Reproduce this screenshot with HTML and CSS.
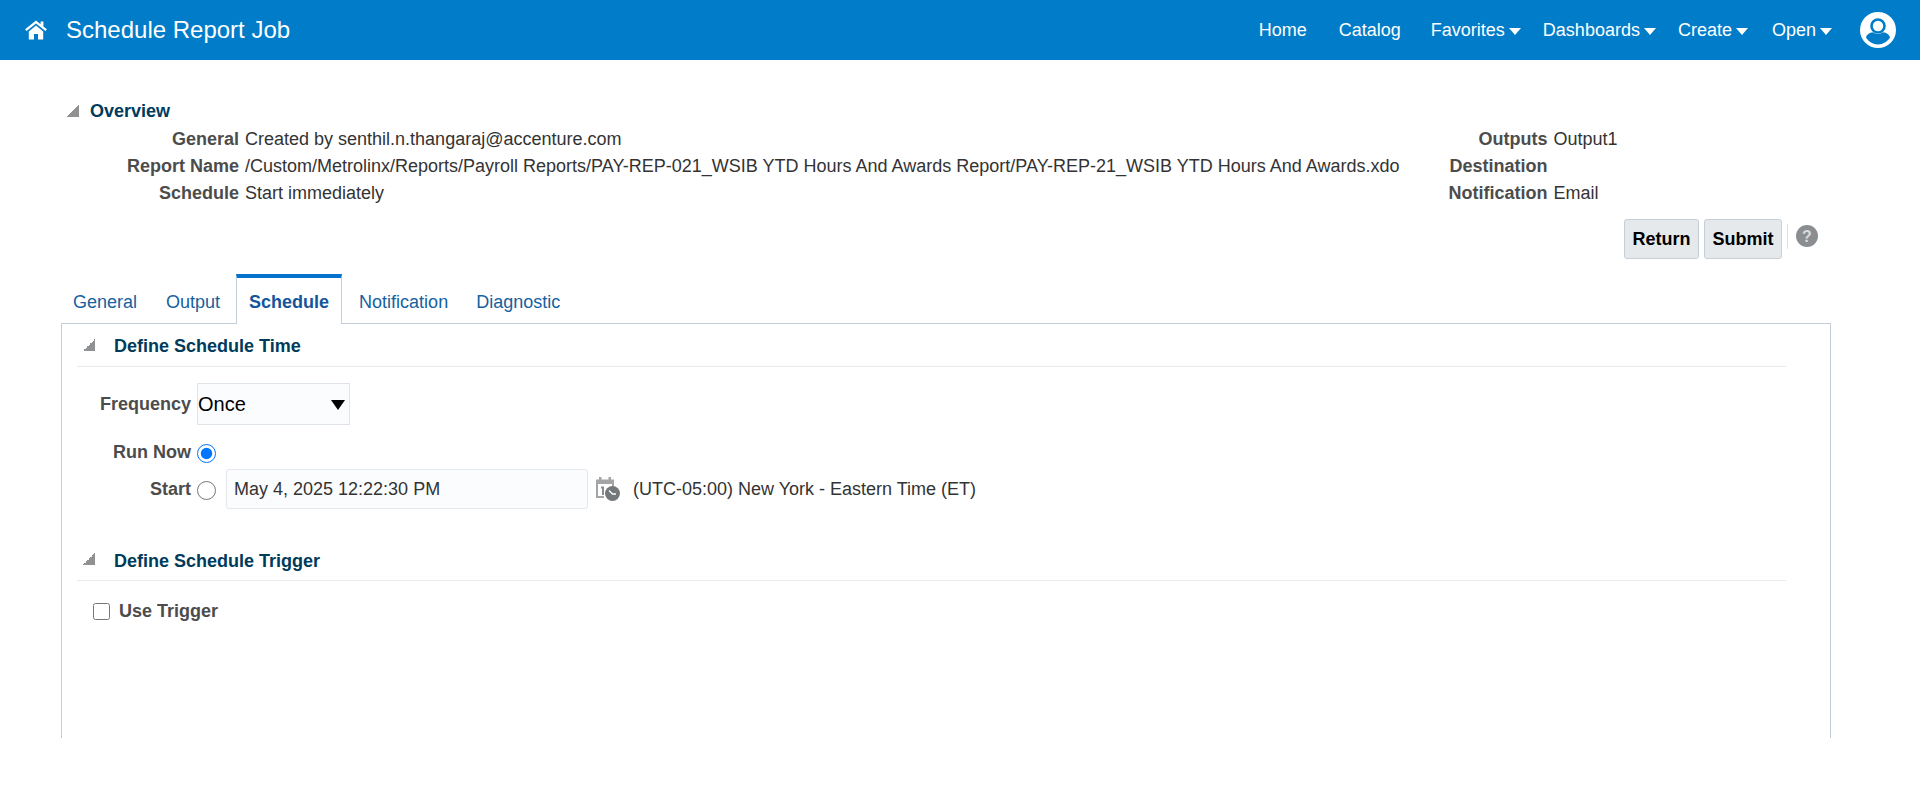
FILE: index.html
```html
<!DOCTYPE html>
<html lang="en">
<head>
<meta charset="utf-8">
<title>Schedule Report Job</title>
<link rel="stylesheet" href="styles.css">
</head>
<body>
<header class="topbar">
  <svg class="home" viewBox="0 0 24 20" width="24" height="20"><path fill="#fff" d="M12 3.400 2.600 11l-1.500-1.800L12 .6l4.600 3.700V1.500h2.800v5l3.500 2.700L21.400 11zM4.800 11.400 12 5.600l7.200 5.800V19.500h-5.200v-5.500h-4v5.500H4.800z"/></svg>
  <h1 class="title">Schedule Report Job</h1>
  <nav class="nav">
    <a class="nav-link nav-home">Home</a>
    <a class="nav-link nav-catalog">Catalog</a>
    <a class="nav-link nav-fav">Favorites<i class="caret"></i></a>
    <a class="nav-link nav-dash">Dashboards<i class="caret"></i></a>
    <a class="nav-link nav-create">Create<i class="caret"></i></a>
    <a class="nav-link nav-open">Open<i class="caret"></i></a>
  </nav>
  <svg class="avatar" viewBox="0 0 36 36" width="36" height="36"><circle cx="18" cy="18" r="18" fill="#fff"/><circle cx="18" cy="14" r="6.500" fill="none" stroke="#007cc8" stroke-width="2.600"/><path fill="#007cc8" d="M6 25.500c.5-3 3.500-5 7-5.300 1.500 1.200 3 1.800 5 1.800s3.500-.6 5-1.800c3.500.3 6.500 2.300 7 5.300-2.500 4-7 7-12 7s-9.500-3-12-7z"/></svg>
</header>

<main class="page">
  <section class="overview">
    <h2 class="sec-head overview-head"><i class="disclosure"></i>Overview</h2>
    <div class="summary">
      <dl class="facts facts-left">
        <dt>General</dt><dd>Created by senthil.n.thangaraj@accenture.com</dd>
        <dt>Report Name</dt><dd>/Custom/Metrolinx/Reports/Payroll Reports/PAY-REP-021_WSIB YTD Hours And Awards Report/PAY-REP-21_WSIB YTD Hours And Awards.xdo</dd>
        <dt>Schedule</dt><dd>Start immediately</dd>
      </dl>
      <dl class="facts facts-right">
        <dt>Outputs</dt><dd>Output1</dd>
        <dt>Destination</dt><dd></dd>
        <dt>Notification</dt><dd>Email</dd>
      </dl>
    </div>
    <div class="actions">
      <button class="btn btn-return">Return</button>
      <button class="btn btn-submit">Submit</button>
      <span class="sep"></span>
      <svg class="help" viewBox="0 0 22 22" width="22" height="22"><circle cx="11" cy="11" r="11" fill="#8b8e91"/><text x="11" y="16.500" text-anchor="middle" class="help-q">?</text></svg>
    </div>
  </section>

  <div class="tabs">
    <a class="tab tab-general">General</a>
    <a class="tab tab-output">Output</a>
    <a class="tab tab-active">Schedule</a>
    <a class="tab tab-notif">Notification</a>
    <a class="tab tab-diag">Diagnostic</a>
  </div>

  <section class="panel">
    <h2 class="sec-head panel-head"><i class="disclosure"></i>Define Schedule Time</h2>
    <div class="form">
      <div class="row row-freq">
        <label class="lbl">Frequency</label>
        <div class="select"><span>Once</span><i class="select-arrow"></i></div>
      </div>
      <div class="row row-run">
        <label class="lbl">Run Now</label>
        <input class="radio" type="radio" name="when" checked>
      </div>
      <div class="row row-start">
        <label class="lbl">Start</label>
        <input class="radio" type="radio" name="when">
        <input class="date" type="text" value="May 4, 2025 12:22:30 PM">
        <svg class="cal" viewBox="0 0 25 24" width="25" height="24">
          <path fill="#a3a5a7" d="M4 0h2.500v2.500h7V0H16v2.500h3V10h-2V7H3v12h6v2H1V2.500h3z"/>
          <path fill="#8a8d90" d="M6 9.500h3V18H7v-6.500H6z"/>
          <circle cx="17.500" cy="16.500" r="7.500" fill="#75787b"/>
          <path fill="none" stroke="#fff" stroke-width="1.300" d="M14 13.500l3.500 3.500h3.500"/>
        </svg>
        <span class="tz">(UTC-05:00) New York - Eastern Time (ET)</span>
      </div>
    </div>
    <h2 class="sec-head panel-head trigger-head"><i class="disclosure"></i>Define Schedule Trigger</h2>
    <label class="check-row"><input class="check" type="checkbox"><span>Use Trigger</span></label>
  </section>
</main>
</body>
</html>
```
FILE: styles.css
```css
* { box-sizing: border-box; }
html, body { margin: 0; padding: 0; background: #fff; }
body { font-family: "Liberation Sans", Arial, sans-serif; font-size: 18px; color: #333; height: 800px; overflow: hidden; }

.topbar { height: 60px; background: #007cc8; display: flex; align-items: center; padding: 0 0 0 24px; color: #fff; }
.home { flex: none; }
.title { margin: 0 0 0 18px; font-size: 24px; font-weight: 400; line-height: 60px; }
.nav { margin-left: auto; display: flex; align-items: center; }
.nav-link { color: #fff; font-size: 18px; display: flex; align-items: center; white-space: nowrap; }
.nav-home { margin-right: 32px; }
.nav-catalog { margin-right: 30px; }
.nav-fav { margin-right: 22px; }
.nav-dash { margin-right: 22px; }
.nav-create { margin-right: 24px; }
.caret { display: inline-block; margin-left: 4px; margin-top: 2px; border-left: 6px solid transparent; border-right: 6px solid transparent; border-top: 7px solid #fff; }
.avatar { margin: 0 24px 0 28px; flex: none; }

.page { padding: 0 89px 0 61px; }
.sec-head { margin: 0; font-size: 18px; font-weight: 700; color: #003b5c; display: flex; align-items: center; }
.disclosure { flex: none; width: 12px; height: 12px; background: linear-gradient(135deg, transparent 50%, #8f9193 50%); }

.overview { height: 213px; padding-top: 40px; }
.overview-head { height: 21px; padding-top: 1px; padding-left: 6px; }
.overview-head .disclosure { margin-right: 11px; margin-top: -1px; }
.summary { display: flex; margin-top: 5px; }
.facts { display: grid; grid-auto-rows: 27px; column-gap: 6px; margin: 0; line-height: 27px; }
.facts dt { font-weight: 700; color: #4c4c4c; text-align: right; white-space: nowrap; }
.facts dd { margin: 0; color: #333; white-space: nowrap; }
.facts-left { grid-template-columns: 178px auto; }
.facts-right { grid-template-columns: auto auto; margin-left: 49px; }

.actions { display: flex; align-items: center; justify-content: flex-end; padding-right: 13px; margin-top: 12px; }
.btn { height: 40px; padding: 0; border: 1px solid #c6ced6; border-radius: 3px; background: #e6e9ec; color: #000; font: 700 18px "Liberation Sans", Arial, sans-serif; }
.btn-return { width: 75px; margin-right: 5px; }
.btn-submit { width: 78px; }
.sep { width: 1px; height: 25px; margin: 0 8px 5px 5px; background: #dde1e5; }
.help { margin-bottom: 6px; }
.help-q { font: 700 16px "Liberation Sans", Arial, sans-serif; fill: #d9dadb; }

.tabs { display: flex; height: 50px; position: relative; padding-left: 12px; align-items: flex-end; }
.tab { color: #15619f; white-space: nowrap; line-height: 50px; height: 46px; }
.tab-general { margin-right: 29px; }
.tab-output { margin-right: 16px; }
.tab-active { width: 106px; height: 50px; line-height: 48px; text-align: center; font-weight: 700; color: #15569a; background: #fff; border: 1px solid #c2cdd8; border-top: 4px solid #0572ce; border-bottom: 0; margin-bottom: -1px; position: relative; z-index: 1; }
.tab-notif { margin-left: 17px; margin-right: 28px; }

.panel { width: 1770px; height: 415px; border: 1px solid #c2cdd8; border-bottom: 0; padding: 0 44px 0 15px; }
.panel-head { height: 43px; border-bottom: 1px solid #e9ecef; padding: 3px 0 0 6px; }
.panel-head .disclosure { margin-right: 19px; margin-top: -4px; }

.form { padding-top: 16px; }
.row { display: flex; align-items: center; }
.lbl { width: 114px; flex: none; font-weight: 700; color: #4c4c4c; text-align: right; }
.row-freq { height: 42px; }
.select { width: 153px; height: 42px; margin-left: 6px; display: flex; align-items: center; justify-content: space-between; padding: 0 4px 0 0; background: #fbfcfe; border: 1px solid #dfe4ea; color: #000; font-size: 20px; }
.select-arrow { width: 0; height: 0; margin-top: 2px; border-left: 7.500px solid transparent; border-right: 7.500px solid transparent; border-top: 10px solid #000; }
.row-run { height: 24px; margin-top: 15px; }
.row-start { height: 40px; margin-top: 5px; }
.radio { flex: none; width: 19px; height: 19px; margin: 2px 0 0 6px; accent-color: #0075ff; }
.date { width: 362px; height: 40px; margin-left: 10px; padding: 0 7px; border: 1px solid #e4e8ec; border-radius: 3px; background: #fbfcfe; color: #333; font: 18px "Liberation Sans", Arial, sans-serif; }
.cal { margin-left: 7px; flex: none; }
.tz { margin-left: 13px; color: #333; white-space: nowrap; }

.trigger-head { margin-top: 30px; height: 42px; }
.check-row { display: flex; align-items: center; margin: 20px 0 0 16px; font-weight: 700; color: #4c4c4c; }
.check { width: 17px; height: 17px; margin: 0 9px 0 0; }
```
